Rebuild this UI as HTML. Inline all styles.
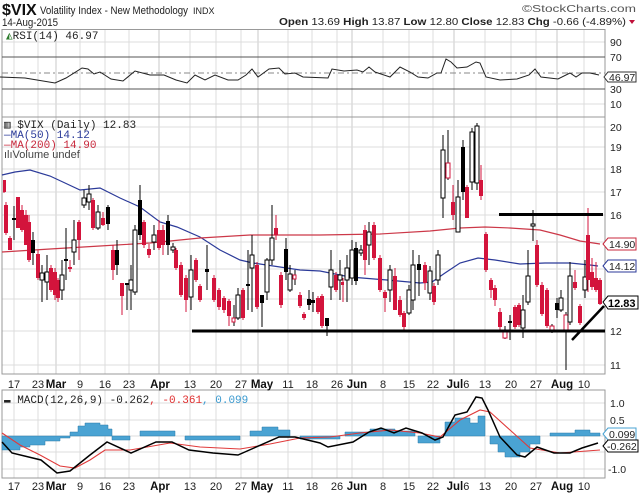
<!DOCTYPE html>
<html><head><meta charset="utf-8"><style>
html,body{margin:0;padding:0;background:#fff}
svg{display:block;font-family:"Liberation Sans",sans-serif}
.g line{stroke:#dcdcdc;stroke-width:1}
.c line{stroke-width:1}
.r rect{fill:#d3143c}
.r line{stroke:#d3143c}
.b rect{fill:#000}
.b line{stroke:#000}
.w rect{fill:#fff;stroke:#000;stroke-width:1}
.w line{stroke:#000}
.ax{font-size:10.5px;fill:#222}
.dt{font-size:11px;fill:#222}
.mo{font-size:11.5px;font-weight:bold;fill:#111}
</style></head><body>
<svg width="640" height="495" viewBox="0 0 640 495" xmlns="http://www.w3.org/2000/svg">
<!-- header -->
<text x="2" y="15" font-size="16" font-weight="bold" fill="#111">$VIX</text>
<text x="40" y="14" font-size="11" fill="#222" textLength="148" lengthAdjust="spacingAndGlyphs">Volatility Index - New Methodology</text>
<text x="193" y="14" font-size="9" fill="#222">INDX</text>
<text x="2" y="26" font-size="11" fill="#222" textLength="56" lengthAdjust="spacingAndGlyphs">14-Aug-2015</text>
<text x="636" y="12" font-size="10" fill="#555" text-anchor="end" textLength="114" lengthAdjust="spacingAndGlyphs">©StockCharts.com</text>
<text x="626" y="25" font-size="10.5" fill="#222" text-anchor="end" textLength="347" lengthAdjust="spacingAndGlyphs"><tspan font-weight="bold">Open</tspan> 13.69 <tspan font-weight="bold">High</tspan> 13.87 <tspan font-weight="bold">Low</tspan> 12.80 <tspan font-weight="bold">Close</tspan> 12.83 <tspan font-weight="bold">Chg</tspan> -0.66 (-4.89%)</text>
<path d="M629,20 l6,0 l-3,4 z" fill="#c0103a"/>

<!-- grid vertical -->
<g class="g">
<line x1="14" y1="30" x2="14" y2="374"/><line x1="38" y1="30" x2="38" y2="374"/><line x1="56" y1="30" x2="56" y2="374" style="stroke:#c8c8c8"/><line x1="80" y1="30" x2="80" y2="374"/><line x1="105" y1="30" x2="105" y2="374"/><line x1="129" y1="30" x2="129" y2="374"/><line x1="159" y1="30" x2="159" y2="374" style="stroke:#c8c8c8"/><line x1="190" y1="30" x2="190" y2="374"/><line x1="216" y1="30" x2="216" y2="374"/><line x1="241" y1="30" x2="241" y2="374"/><line x1="258" y1="30" x2="258" y2="374" style="stroke:#c8c8c8"/><line x1="288" y1="30" x2="288" y2="374"/><line x1="312" y1="30" x2="312" y2="374"/><line x1="337" y1="30" x2="337" y2="374"/><line x1="352" y1="30" x2="352" y2="374" style="stroke:#c8c8c8"/><line x1="383" y1="30" x2="383" y2="374"/><line x1="409" y1="30" x2="409" y2="374"/><line x1="433" y1="30" x2="433" y2="374"/><line x1="454" y1="30" x2="454" y2="374" style="stroke:#c8c8c8"/><line x1="485" y1="30" x2="485" y2="374"/><line x1="511" y1="30" x2="511" y2="374"/><line x1="536" y1="30" x2="536" y2="374"/><line x1="557" y1="30" x2="557" y2="374" style="stroke:#c8c8c8"/><line x1="584" y1="30" x2="584" y2="374"/>
<line x1="14" y1="390" x2="14" y2="478"/><line x1="38" y1="390" x2="38" y2="478"/><line x1="56" y1="390" x2="56" y2="478"/><line x1="80" y1="390" x2="80" y2="478"/><line x1="105" y1="390" x2="105" y2="478"/><line x1="129" y1="390" x2="129" y2="478"/><line x1="159" y1="390" x2="159" y2="478"/><line x1="190" y1="390" x2="190" y2="478"/><line x1="216" y1="390" x2="216" y2="478"/><line x1="241" y1="390" x2="241" y2="478"/><line x1="258" y1="390" x2="258" y2="478"/><line x1="288" y1="390" x2="288" y2="478"/><line x1="312" y1="390" x2="312" y2="478"/><line x1="337" y1="390" x2="337" y2="478"/><line x1="352" y1="390" x2="352" y2="478"/><line x1="383" y1="390" x2="383" y2="478"/><line x1="409" y1="390" x2="409" y2="478"/><line x1="433" y1="390" x2="433" y2="478"/><line x1="454" y1="390" x2="454" y2="478"/><line x1="485" y1="390" x2="485" y2="478"/><line x1="511" y1="390" x2="511" y2="478"/><line x1="536" y1="390" x2="536" y2="478"/><line x1="557" y1="390" x2="557" y2="478"/><line x1="584" y1="390" x2="584" y2="478"/>
<line x1="2" y1="42" x2="605" y2="42"/><line x1="2" y1="104" x2="605" y2="104"/>
<line x1="2" y1="127" x2="605" y2="127"/><line x1="2" y1="147" x2="605" y2="147"/><line x1="2" y1="169" x2="605" y2="169"/><line x1="2" y1="192" x2="605" y2="192"/><line x1="2" y1="215" x2="605" y2="215"/><line x1="2" y1="242" x2="605" y2="242"/><line x1="2" y1="269" x2="605" y2="269"/><line x1="2" y1="299" x2="605" y2="299"/><line x1="2" y1="331" x2="605" y2="331"/><line x1="2" y1="365" x2="605" y2="365"/>
<line x1="2" y1="403" x2="605" y2="403"/><line x1="2" y1="420" x2="605" y2="420"/><line x1="2" y1="436" x2="605" y2="436"/><line x1="2" y1="452" x2="605" y2="452"/><line x1="2" y1="469" x2="605" y2="469"/>
</g>
<g fill="none" stroke="#999">
<rect x="2" y="29.5" width="603" height="87.5"/>
<rect x="2" y="117" width="603" height="257"/>
<rect x="2" y="390" width="603" height="88"/>
</g>
<!-- RSI -->
<line x1="2" y1="57" x2="605" y2="57" stroke="#555"/>
<line x1="2" y1="89" x2="605" y2="89" stroke="#555"/>
<line x1="2" y1="73" x2="605" y2="73" stroke="#888" stroke-dasharray="6,3,2,3"/>
<polyline fill="none" stroke="#222" stroke-width="1" points="0,77 25,78 37,80 55,83 66,78 82,68 88,69 94,74 100,72 111,79 123,81 135,71 150,75 164,75 176,80 187,83 195,75 205,80 215,75 228,80 238,80 246,75 252,69 258,77 269,69 279,68 285,74 295,73 303,77 328,78 332,69 344,71 357,70 363,72 369,67 375,72 390,77 400,67 410,72 418,77 428,78 437,73 441,73 446,59 451,62 457,68 467,67 476,62 480,63 486,77 500,80 517,79 529,75 535,69 541,77 558,79 570,73 576,77 582,73 590,73 599,75"/>
<text x="6" y="39" font-size="11" fill="#222" font-family="Liberation Mono,monospace"><tspan fill="#2a7a2a">◭</tspan>RSI(14) 46.97</text>
<g class="ax"><text x="610" y="46">90</text><text x="610" y="61">70</text><text x="610" y="93">30</text><text x="610" y="108">10</text></g>
<path d="M604,77 l4,-5 h28 v10 h-28 z" fill="#fff" stroke="#333"/><text x="609" y="81" class="ax" font-size="10">46.97</text>

<g font-family="Liberation Mono,monospace" font-size="11">
<text x="4" y="128" fill="#222">▥ $VIX (Daily) 12.83</text>
<text x="4" y="138" fill="#2a3a99">—MA(50) 14.12</text>
<text x="4" y="148" fill="#c8283c">—MA(200) 14.90</text>
<text x="4" y="158" fill="#444" font-family="Liberation Sans,sans-serif">ılıVolume undef</text>
</g>
<polyline fill="none" stroke="#2b3a99" stroke-width="1.2" points="2,175 15,172 30,170 50,176 65,183 80,190 100,188 120,198 140,207 160,222 177,227 200,237 220,250 240,260 253,263 280,267 300,270 320,271 350,277 387,280 420,283 432,282 445,273 460,263 478,258 495,260 520,264 545,263 570,263 590,265 598,266"/>
<polyline fill="none" stroke="#cc3848" stroke-width="1.2" points="2,252 50,249 100,246 150,243 200,238 250,235 320,235 380,234 430,231 460,228 485,227 510,228 540,230 560,235 580,241 600,244"/>

<g class="c">
<g class="r"><line x1="4" y1="180" x2="4" y2="193"/><rect x="3" y="180" width="3" height="12"/></g>
<g class="r"><line x1="6" y1="202" x2="6" y2="235"/><rect x="4" y="205" width="4" height="28"/></g>
<g class="r"><line x1="10" y1="236" x2="10" y2="250"/><rect x="8" y="238" width="4" height="12"/></g>
<g class="b"><line x1="14" y1="206" x2="14" y2="240"/><rect x="12" y="218" width="4" height="2"/></g>
<g class="r"><line x1="18" y1="197" x2="18" y2="228"/><rect x="16" y="197" width="4" height="31"/></g>
<g class="r"><line x1="22" y1="205" x2="22" y2="232"/><rect x="20" y="210" width="4" height="20"/></g>
<g class="r"><line x1="26" y1="210" x2="26" y2="245"/><rect x="24" y="215" width="4" height="30"/></g>
<g class="r"><line x1="29" y1="215" x2="29" y2="262"/><rect x="27" y="222" width="4" height="38"/></g>
<g class="b"><line x1="33" y1="232" x2="33" y2="265"/><rect x="31" y="240" width="4" height="13"/></g>
<g class="r"><line x1="38" y1="250" x2="38" y2="280"/><rect x="36" y="254" width="4" height="24"/></g>
<g class="w"><line x1="42" y1="265" x2="42" y2="302"/><rect x="40" y="273" width="4" height="7"/></g>
<g class="w"><line x1="47" y1="255" x2="47" y2="300"/><rect x="45" y="272" width="4" height="10"/></g>
<g class="r"><line x1="51" y1="265" x2="51" y2="292"/><rect x="49" y="268" width="4" height="22"/></g>
<g class="r"><line x1="55" y1="268" x2="55" y2="300"/><rect x="53" y="272" width="4" height="23"/></g>
<g class="r"><line x1="58" y1="278" x2="58" y2="302"/><rect x="56" y="280" width="4" height="18"/></g>
<g class="w"><line x1="62" y1="260" x2="62" y2="300"/><rect x="60" y="275" width="4" height="15"/></g>
<g class="b"><line x1="66" y1="228" x2="66" y2="280"/><rect x="64" y="259" width="4" height="2"/></g>
<g class="r"><line x1="70" y1="260" x2="70" y2="272"/><rect x="68" y="267" width="4" height="2"/></g>
<g class="w"><line x1="74" y1="220" x2="74" y2="265"/><rect x="72" y="240" width="4" height="12"/></g>
<g class="r"><line x1="79" y1="220" x2="79" y2="260"/><rect x="77" y="222" width="4" height="18"/></g>
<g class="w"><line x1="84" y1="190" x2="84" y2="208"/><rect x="82" y="198" width="4" height="7"/></g>
<g class="w"><line x1="89" y1="185" x2="89" y2="210"/><rect x="87" y="194" width="4" height="8"/></g>
<g class="r"><line x1="93" y1="198" x2="93" y2="230"/><rect x="91" y="200" width="4" height="28"/></g>
<g class="w"><line x1="98" y1="205" x2="98" y2="230"/><rect x="96" y="212" width="4" height="16"/></g>
<g class="r"><line x1="103" y1="212" x2="103" y2="226"/><rect x="101" y="218" width="4" height="7"/></g>
<g class="b"><line x1="108" y1="205" x2="108" y2="230"/><rect x="106" y="207" width="4" height="17"/></g>
<g class="r"><line x1="113" y1="245" x2="113" y2="280"/><rect x="111" y="250" width="4" height="20"/></g>
<g class="b"><line x1="117" y1="240" x2="117" y2="275"/><rect x="115" y="250" width="4" height="15"/></g>
<g class="r"><line x1="122" y1="283" x2="122" y2="315"/><rect x="120" y="283" width="4" height="13"/></g>
<g class="b"><line x1="127" y1="283" x2="127" y2="310"/><rect x="125" y="283" width="4" height="2"/></g>
<g class="w"><line x1="131" y1="265" x2="131" y2="310"/><rect x="129" y="280" width="4" height="10"/></g>
<g class="w"><line x1="135" y1="225" x2="135" y2="295"/><rect x="133" y="230" width="4" height="62"/></g>
<g class="b"><line x1="140" y1="185" x2="140" y2="240"/><rect x="138" y="200" width="4" height="35"/></g>
<g class="r"><line x1="144" y1="220" x2="144" y2="248"/><rect x="142" y="222" width="4" height="23"/></g>
<g class="r"><line x1="149" y1="244" x2="149" y2="258"/><rect x="147" y="249" width="4" height="6"/></g>
<g class="w"><line x1="154" y1="225" x2="154" y2="250"/><rect x="152" y="235" width="4" height="7"/></g>
<g class="r"><line x1="159" y1="220" x2="159" y2="250"/><rect x="157" y="230" width="4" height="18"/></g>
<g class="r"><line x1="163" y1="225" x2="163" y2="255"/><rect x="161" y="230" width="4" height="15"/></g>
<g class="b"><line x1="168" y1="215" x2="168" y2="255"/><rect x="166" y="221" width="4" height="24"/></g>
<g class="w"><line x1="173" y1="243" x2="173" y2="253"/><rect x="171" y="247" width="4" height="3"/></g>
<g class="r"><line x1="176" y1="248" x2="176" y2="270"/><rect x="174" y="250" width="4" height="18"/></g>
<g class="r"><line x1="181" y1="262" x2="181" y2="297"/><rect x="179" y="265" width="4" height="30"/></g>
<g class="r"><line x1="186" y1="275" x2="186" y2="312"/><rect x="184" y="278" width="4" height="22"/></g>
<g class="w"><line x1="191" y1="255" x2="191" y2="310"/><rect x="189" y="270" width="4" height="27"/></g>
<g class="r"><line x1="196" y1="258" x2="196" y2="282"/><rect x="194" y="260" width="4" height="20"/></g>
<g class="r"><line x1="200" y1="284" x2="200" y2="302"/><rect x="198" y="286" width="4" height="14"/></g>
<g class="b"><line x1="207" y1="245" x2="207" y2="290"/><rect x="205" y="269" width="4" height="3"/></g>
<g class="r"><line x1="214" y1="275" x2="214" y2="302"/><rect x="212" y="278" width="4" height="22"/></g>
<g class="r"><line x1="219" y1="288" x2="219" y2="310"/><rect x="217" y="290" width="4" height="17"/></g>
<g class="r"><line x1="224" y1="296" x2="224" y2="313"/><rect x="222" y="298" width="4" height="12"/></g>
<g class="r"><line x1="229" y1="299" x2="229" y2="326"/><rect x="227" y="301" width="4" height="15"/></g>
<g class="w"><line x1="234" y1="305" x2="234" y2="326"/><rect x="232" y="318" width="3" height="4" style="stroke:#d3143c"/></g>
<g class="w"><line x1="238" y1="288" x2="238" y2="320"/><rect x="236" y="295" width="4" height="23"/></g>
<g class="r"><line x1="243" y1="288" x2="243" y2="320"/><rect x="241" y="290" width="4" height="28"/></g>
<g class="b"><line x1="248" y1="250" x2="248" y2="310"/><rect x="246" y="284" width="4" height="2"/></g>
<g class="w"><line x1="252" y1="235" x2="252" y2="312"/><rect x="250" y="255" width="4" height="13"/></g>
<g class="r"><line x1="257" y1="262" x2="257" y2="309"/><rect x="255" y="265" width="4" height="42"/></g>
<g class="b"><line x1="262" y1="295" x2="262" y2="327"/><rect x="260" y="295" width="4" height="8"/></g>
<g class="w"><line x1="267" y1="258" x2="267" y2="300"/><rect x="265" y="260" width="4" height="32"/></g>
<g class="w"><line x1="272" y1="205" x2="272" y2="265"/><rect x="270" y="238" width="4" height="22"/></g>
<g class="r"><line x1="276" y1="215" x2="276" y2="240"/><rect x="274" y="228" width="4" height="7"/></g>
<g class="r"><line x1="281" y1="272" x2="281" y2="308"/><rect x="279" y="275" width="4" height="30"/></g>
<g class="b"><line x1="286" y1="238" x2="286" y2="280"/><rect x="284" y="249" width="4" height="23"/></g>
<g class="w"><line x1="290" y1="265" x2="290" y2="292"/><rect x="288" y="274" width="4" height="16"/></g>
<g class="w"><line x1="295" y1="270" x2="295" y2="285"/><rect x="293" y="275" width="3" height="4" style="stroke:#d3143c"/></g>
<g class="r"><line x1="300" y1="292" x2="300" y2="308"/><rect x="298" y="295" width="4" height="11"/></g>
<g class="r"><line x1="304" y1="312" x2="304" y2="320"/><rect x="302" y="314" width="4" height="4"/></g>
<g class="b"><line x1="309" y1="290" x2="309" y2="310"/><rect x="307" y="299" width="4" height="6"/></g>
<g class="b"><line x1="313" y1="292" x2="313" y2="312"/><rect x="311" y="300" width="4" height="3"/></g>
<g class="r"><line x1="318" y1="296" x2="318" y2="314"/><rect x="316" y="298" width="4" height="14"/></g>
<g class="r"><line x1="322" y1="294" x2="322" y2="328"/><rect x="320" y="296" width="4" height="30"/></g>
<g class="b"><line x1="327" y1="318" x2="327" y2="336"/><rect x="325" y="318" width="4" height="8"/></g>
<g class="w"><line x1="331" y1="250" x2="331" y2="300"/><rect x="329" y="270" width="4" height="17"/></g>
<g class="r"><line x1="336" y1="272" x2="336" y2="292"/><rect x="334" y="275" width="4" height="15"/></g>
<g class="w"><line x1="340" y1="260" x2="340" y2="300"/><rect x="338" y="275" width="4" height="5"/></g>
<g class="r"><line x1="343" y1="278" x2="343" y2="302"/><rect x="341" y="282" width="3" height="3"/></g>
<g class="w"><line x1="347" y1="255" x2="347" y2="302"/><rect x="345" y="268" width="4" height="12"/></g>
<g class="w"><line x1="352" y1="240" x2="352" y2="285"/><rect x="350" y="250" width="4" height="28"/></g>
<g class="b"><line x1="356" y1="242" x2="356" y2="285"/><rect x="354" y="248" width="4" height="33"/></g>
<g class="w"><line x1="361" y1="245" x2="361" y2="256"/><rect x="359" y="250" width="4" height="3"/></g>
<g class="r"><line x1="365" y1="225" x2="365" y2="275"/><rect x="363" y="230" width="4" height="30"/></g>
<g class="w"><line x1="369" y1="222" x2="369" y2="265"/><rect x="367" y="232" width="4" height="13"/></g>
<g class="r"><line x1="374" y1="222" x2="374" y2="260"/><rect x="372" y="225" width="4" height="33"/></g>
<g class="r"><line x1="380" y1="255" x2="380" y2="292"/><rect x="378" y="258" width="4" height="32"/></g>
<g class="r"><line x1="385" y1="290" x2="385" y2="312"/><rect x="383" y="292" width="4" height="6"/></g>
<g class="w"><line x1="390" y1="265" x2="390" y2="302"/><rect x="388" y="270" width="4" height="20"/></g>
<g class="r"><line x1="395" y1="268" x2="395" y2="310"/><rect x="393" y="276" width="4" height="34"/></g>
<g class="r"><line x1="400" y1="296" x2="400" y2="317"/><rect x="398" y="300" width="4" height="15"/></g>
<g class="r"><line x1="404" y1="311" x2="404" y2="331"/><rect x="402" y="313" width="4" height="14"/></g>
<g class="w"><line x1="409" y1="285" x2="409" y2="315"/><rect x="407" y="290" width="4" height="23"/></g>
<g class="w"><line x1="413" y1="250" x2="413" y2="310"/><rect x="411" y="265" width="4" height="35"/></g>
<g class="b"><line x1="419" y1="255" x2="419" y2="296"/><rect x="417" y="264" width="4" height="6"/></g>
<g class="r"><line x1="425" y1="262" x2="425" y2="290"/><rect x="423" y="265" width="4" height="18"/></g>
<g class="w"><line x1="430" y1="266" x2="430" y2="300"/><rect x="428" y="271" width="4" height="22"/></g>
<g class="r"><line x1="434" y1="283" x2="434" y2="305"/><rect x="432" y="286" width="4" height="16"/></g>
<g class="w"><line x1="438" y1="250" x2="438" y2="285"/><rect x="436" y="255" width="4" height="25"/></g>
<g class="w"><line x1="443" y1="135" x2="443" y2="218"/><rect x="441" y="150" width="4" height="48"/></g>
<g class="w"><line x1="448" y1="130" x2="448" y2="180"/><rect x="446" y="163" width="4" height="15" style="stroke:#d3143c"/></g>
<g class="r"><line x1="453" y1="185" x2="453" y2="220"/><rect x="451" y="202" width="4" height="13"/></g>
<g class="w"><line x1="458" y1="180" x2="458" y2="232"/><rect x="456" y="197" width="4" height="35"/></g>
<g class="b"><line x1="463" y1="140" x2="463" y2="200"/><rect x="461" y="147" width="4" height="45"/></g>
<g class="r"><line x1="467" y1="185" x2="467" y2="218"/><rect x="465" y="187" width="4" height="31"/></g>
<g class="w"><line x1="472" y1="128" x2="472" y2="190"/><rect x="470" y="132" width="4" height="50"/></g>
<g class="w"><line x1="477" y1="123" x2="477" y2="190"/><rect x="475" y="126" width="4" height="57"/></g>
<g class="r"><line x1="481" y1="165" x2="481" y2="200"/><rect x="479" y="180" width="4" height="16"/></g>
<g class="r"><line x1="486" y1="232" x2="486" y2="272"/><rect x="484" y="234" width="4" height="36"/></g>
<g class="r"><line x1="491" y1="278" x2="491" y2="298"/><rect x="489" y="280" width="4" height="10"/></g>
<g class="r"><line x1="495" y1="285" x2="495" y2="306"/><rect x="493" y="288" width="4" height="12"/></g>
<g class="r"><line x1="500" y1="308" x2="500" y2="330"/><rect x="498" y="312" width="4" height="15"/></g>
<g class="w"><line x1="505" y1="326" x2="505" y2="339"/><rect x="503" y="330" width="4" height="8" style="stroke:#d3143c"/></g>
<g class="b"><line x1="510" y1="315" x2="510" y2="340"/><rect x="508" y="321" width="4" height="2"/></g>
<g class="r"><line x1="515" y1="305" x2="515" y2="329"/><rect x="513" y="307" width="4" height="20"/></g>
<g class="r"><line x1="519" y1="303" x2="519" y2="327"/><rect x="517" y="305" width="4" height="20"/></g>
<g class="w"><line x1="523" y1="295" x2="523" y2="338"/><rect x="521" y="310" width="4" height="18"/></g>
<g class="w"><line x1="528" y1="250" x2="528" y2="305"/><rect x="526" y="276" width="4" height="26"/></g>
<g class="w"><line x1="533" y1="210" x2="533" y2="241"/><rect x="531" y="224" width="4" height="2"/></g>
<g class="r"><line x1="537" y1="240" x2="537" y2="287"/><rect x="535" y="245" width="4" height="40"/></g>
<g class="r"><line x1="542" y1="282" x2="542" y2="316"/><rect x="540" y="285" width="4" height="29"/></g>
<g class="r"><line x1="547" y1="288" x2="547" y2="328"/><rect x="545" y="290" width="4" height="36"/></g>
<g class="w"><line x1="552" y1="324" x2="552" y2="333"/><rect x="550" y="326" width="4" height="4" style="stroke:#d3143c"/></g>
<g class="b"><line x1="557" y1="298" x2="557" y2="318"/><rect x="555" y="303" width="4" height="7"/></g>
<g class="w"><line x1="561" y1="290" x2="561" y2="312"/><rect x="559" y="298" width="4" height="12"/></g>
<g class="w"><line x1="566" y1="312" x2="566" y2="370"/><rect x="564" y="315" width="4" height="15" style="stroke:#d3143c"/></g>
<g class="w"><line x1="570" y1="262" x2="570" y2="325"/><rect x="568" y="276" width="4" height="46"/></g>
<g class="r"><line x1="575" y1="270" x2="575" y2="290"/><rect x="573" y="282" width="4" height="6"/></g>
<g class="r"><line x1="580" y1="304" x2="580" y2="325"/><rect x="578" y="306" width="4" height="17"/></g>
<g class="w"><line x1="585" y1="260" x2="585" y2="298"/><rect x="583" y="277" width="4" height="13"/></g>
<g class="r"><line x1="588" y1="208" x2="588" y2="292"/><rect x="586" y="235" width="4" height="45"/></g>
<g class="r"><line x1="592" y1="258" x2="592" y2="290"/><rect x="590" y="272" width="4" height="15"/></g>
<g class="r"><line x1="596" y1="262" x2="596" y2="292"/><rect x="594" y="278" width="4" height="12"/></g>
<g class="r"><line x1="600" y1="278" x2="600" y2="305"/><rect x="598" y="280" width="4" height="24"/></g>
</g>
<line x1="192" y1="331" x2="605" y2="331" stroke="#000" stroke-width="3"/>
<line x1="499" y1="214.5" x2="603" y2="214.5" stroke="#000" stroke-width="3"/>
<line x1="572" y1="340" x2="604" y2="306" stroke="#000" stroke-width="2.5"/>

<g class="ax"><text x="610" y="131">20</text><text x="610" y="151">19</text><text x="610" y="173">18</text><text x="610" y="196">17</text><text x="610" y="219">16</text><text x="610" y="335">12</text><text x="610" y="369">11</text></g>
<path d="M603,244 l5,-6 h28 v12 h-28 z" fill="#fff" stroke="#c8283c"/><text x="609" y="248" class="ax" fill="#333">14.90</text>
<path d="M603,266 l5,-6 h28 v12 h-28 z" fill="#fff" stroke="#2b3a99"/><text x="609" y="270" class="ax" fill="#333">14.12</text>
<path d="M603,302 l5,-6 h30 v13 h-30 z" fill="#fff" stroke="#000"/><text x="608" y="307" font-size="11" font-weight="bold" fill="#000">12.83</text>

<g class="dt" text-anchor="middle">
<text x="14" y="388">17</text><text x="38" y="388">23</text><text x="56" y="388" class="mo">Mar</text><text x="80" y="388">9</text><text x="105" y="388">16</text><text x="129" y="388">23</text><text x="160" y="388" class="mo">Apr</text><text x="190" y="388">13</text><text x="216" y="388">20</text><text x="241" y="388">27</text><text x="262" y="388" class="mo">May</text><text x="288" y="388">11</text><text x="312" y="388">18</text><text x="337" y="388">26</text><text x="357" y="388" class="mo">Jun</text><text x="383" y="388">8</text><text x="409" y="388">15</text><text x="433" y="388">22</text><text x="458" y="388"><tspan class="mo">Jul</tspan>6</text><text x="485" y="388">13</text><text x="511" y="388">20</text><text x="536" y="388">27</text><text x="562" y="388" class="mo">Aug</text><text x="584" y="388">10</text>
<text x="14" y="490">17</text><text x="38" y="490">23</text><text x="56" y="490" class="mo">Mar</text><text x="80" y="490">9</text><text x="105" y="490">16</text><text x="129" y="490">23</text><text x="160" y="490" class="mo">Apr</text><text x="190" y="490">13</text><text x="216" y="490">20</text><text x="241" y="490">27</text><text x="262" y="490" class="mo">May</text><text x="288" y="490">11</text><text x="312" y="490">18</text><text x="337" y="490">26</text><text x="357" y="490" class="mo">Jun</text><text x="383" y="490">8</text><text x="409" y="490">15</text><text x="433" y="490">22</text><text x="458" y="490"><tspan class="mo">Jul</tspan>6</text><text x="485" y="490">13</text><text x="511" y="490">20</text><text x="536" y="490">27</text><text x="562" y="490" class="mo">Aug</text><text x="584" y="490">10</text>
</g>

<text x="4" y="403" font-size="11" font-family="Liberation Mono,monospace" fill="#222"><tspan font-weight="bold">▬</tspan> MACD(12,26,9) -0.262<tspan fill="#e03030">, -0.361</tspan><tspan fill="#3a9ad0">, 0.099</tspan></text>
<path fill="#4aa3d3" stroke="#2a7aa8" stroke-width="0.5" d="M2,436 V450 H20 V447 H30 V445 H45 V441 H60 V438 H70 V432 H78 V426 H85 V423 H100 V425 H108 V429 H112 V436 Z
M112,436 V440 H130 V436 Z M140,436 V431 H175 V436 Z M185,436 V440 H240 V436 Z
M250,436 V431 H262 V427 H278 V430 H290 V436 Z M300,436 V439 H340 V436 Z
M345,436 V432 H370 V429 H395 V431 H415 V436 Z M418,436 V443 H440 V436 Z
M445,436 V422 H455 V418 H470 V423 H478 V416 H485 V436 Z
M490,436 V444 H498 V452 H505 V457 H520 V452 H530 V444 H540 V436 Z M550,436 V433 H575 V430 H590 V433 H600 V436 Z"/>
<polyline fill="none" stroke="#e03a3a" stroke-width="1.1" points="2,433 20,445 40,455 60,466 75,468 90,460 105,450 130,450 170,443 200,447 240,449 270,444 300,438 330,437 360,433 390,430 420,433 440,437 460,420 480,410 490,412 510,430 530,448 560,453 600,450"/>
<polyline fill="none" stroke="#000" stroke-width="1.5" points="2,442 12,453 41,460 57,473 70,471 90,455 107,442 131,453 156,442 172,442 189,450 213,453 238,455 254,448 279,437 295,437 320,443 328,447 353,442 369,432 381,428 394,433 406,428 422,433 435,440 443,437 455,415 467,412 476,397 482,398 488,410 500,437 517,455 525,457 537,447 554,453 570,453 582,448 598,443"/>
<g class="ax"><text x="610" y="407">1.0</text><text x="610" y="424">0.5</text><text x="608" y="473">-1.0</text></g>
<path d="M603,434 l5,-6 h28 v12 h-28 z" fill="#fff" stroke="#4aa3d3"/><text x="609" y="438" class="ax">0.099</text>
<path d="M603,446 l5,-6 h30 v12 h-30 z" fill="#fff" stroke="#000"/><text x="607" y="450" class="ax">-0.262</text>
</svg>
</body></html>
